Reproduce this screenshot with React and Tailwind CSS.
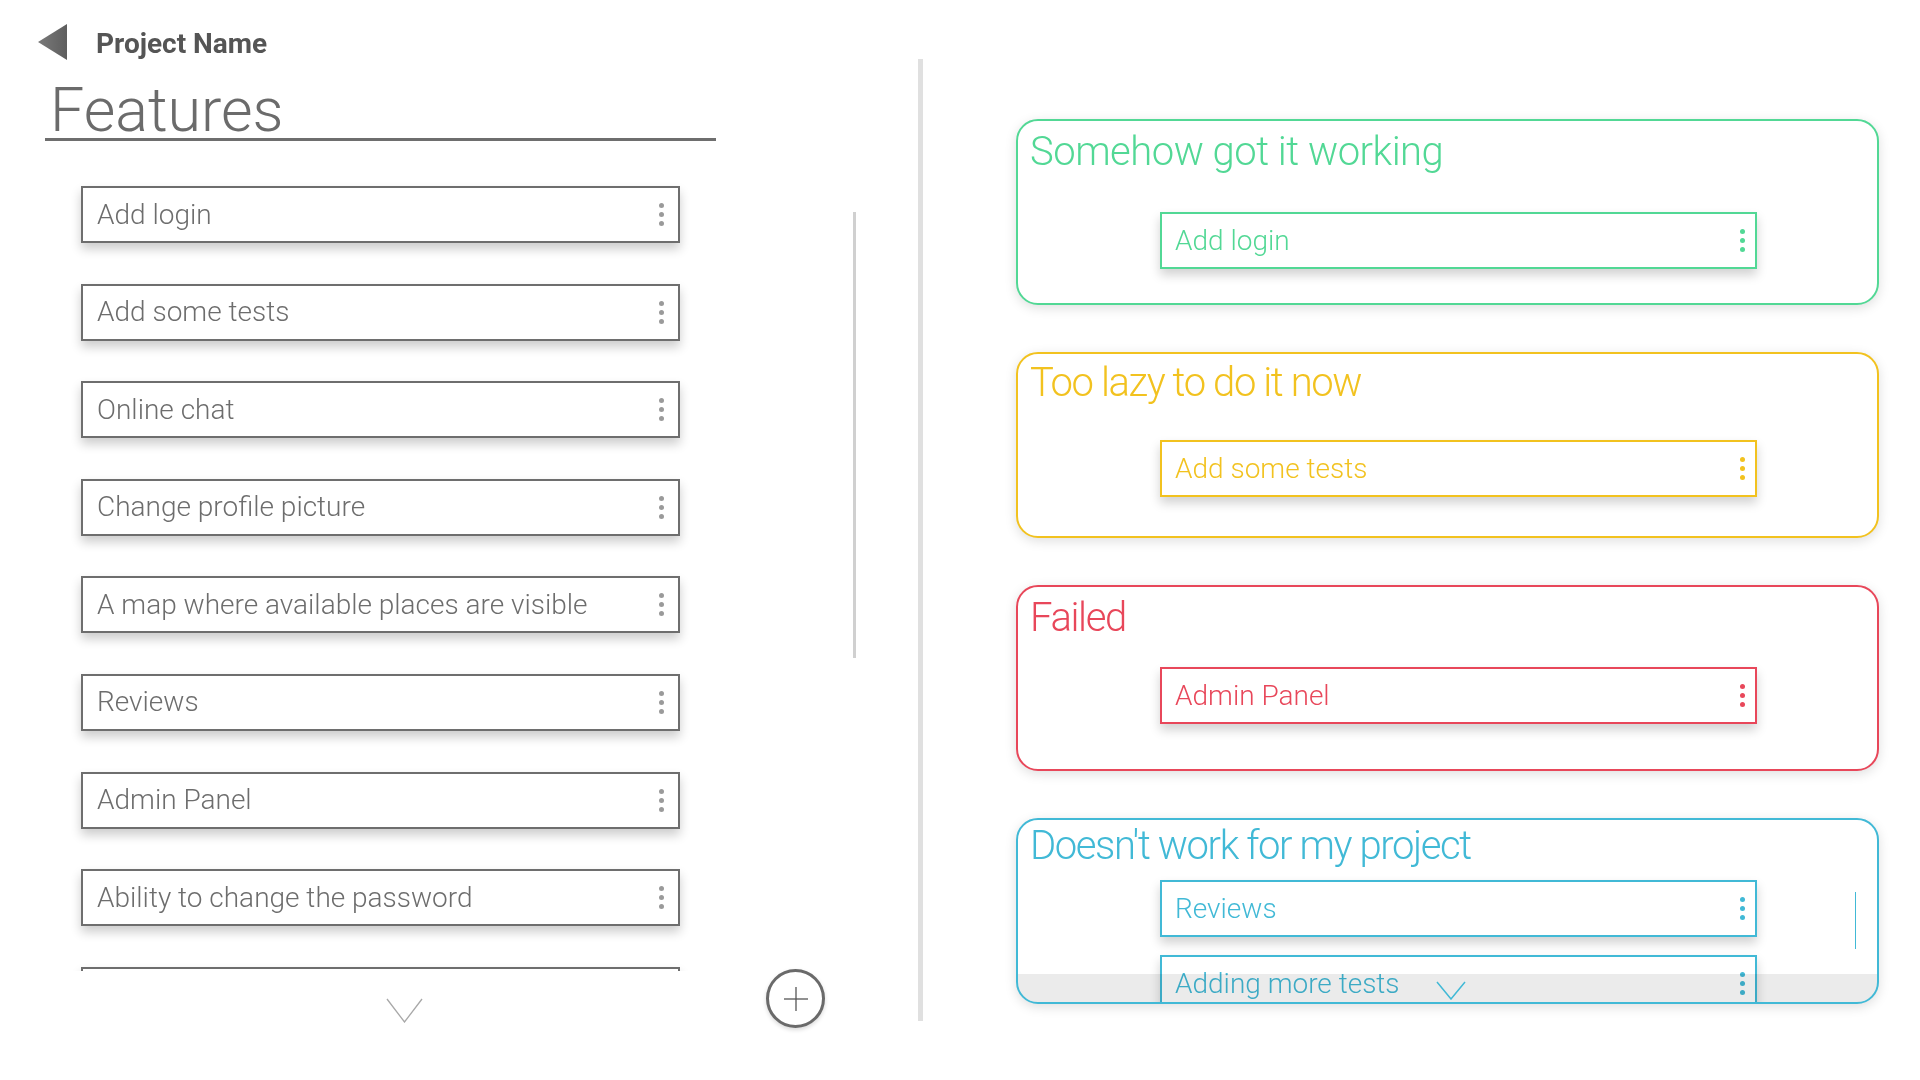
const features = [
  'Add login',
  'Add some tests',
  'Online chat',
  'Change profile picture',
  'A map where available places are visible',
  'Reviews',
  'Admin Panel',
  'Ability to change the password',
  '',
];

const columns = [
  {
    title: 'Somehow got it working',
    border: 'border-[#52d895]',
    text: 'text-[#52d895]',
    dot: 'bg-[#52d895]',
    titlePad: 'pt-[11px] tracking-[-0.5px]',
    innerTop: 'mt-[40px]',
    items: ['Add login'],
  },
  {
    title: 'Too lazy to do it now',
    border: 'border-[#f2c21f]',
    text: 'text-[#f2c21f]',
    dot: 'bg-[#f2c21f]',
    titlePad: 'pt-[9px] tracking-[-1.4px]',
    innerTop: 'mt-[37px]',
    items: ['Add some tests'],
  },
  {
    title: 'Failed',
    border: 'border-[#e8475a]',
    text: 'text-[#e8475a]',
    dot: 'bg-[#e8475a]',
    titlePad: 'pt-[11px] tracking-[-1.4px]',
    innerTop: 'mt-[29px]',
    items: ['Admin Panel'],
  },
  {
    title: "Doesn't work for my project",
    border: 'border-[#41b9d6]',
    text: 'text-[#41b9d6]',
    dot: 'bg-[#41b9d6]',
    titlePad: 'pt-[6px] tracking-[-1.4px]',
    innerTop: 'mt-[14px]',
    items: ['Reviews', 'Adding more tests'],
    scroll: true,
  },
];

function Kebab({ color }) {
  return (
    <div className="flex flex-col gap-[4px]">
      <span className={`w-[5px] h-[5px] rounded-full ${color}`} />
      <span className={`w-[5px] h-[5px] rounded-full ${color}`} />
      <span className={`w-[5px] h-[5px] rounded-full ${color}`} />
    </div>
  );
}

function FeatureCard({ label }) {
  return (
    <div className="w-[599px] h-[57px] shrink-0 flex items-center justify-between border-2 border-[#6e6e6e] bg-white pl-[14px] pr-[14px] shadow-[0_6px_10px_rgba(0,0,0,0.2)]">
      <span className="text-[28px] font-light text-[#6d6d6d] leading-none">{label}</span>
      <Kebab color="bg-[#9a9a9a]" />
    </div>
  );
}

function StatusCard({ col }) {
  return (
    <div
      className={`relative w-[863px] h-[186px] shrink-0 rounded-[22px] border-2 ${col.border} bg-white overflow-hidden shadow-[0_3px_12px_rgba(0,0,0,0.13)]`}
    >
      <div className={`${col.titlePad} pl-[12px] text-[40px] leading-[40px] font-light ${col.text}`}>
        {col.title}
      </div>
      <div className={`${col.innerTop} ml-[142px] flex flex-col gap-[18px]`}>
        {col.items.map((item) => (
          <div
            key={item}
            className={`w-[597px] h-[57px] shrink-0 flex items-center justify-between border-2 ${col.border} bg-white pl-[13px] pr-[10px] shadow-[0_6px_10px_rgba(0,0,0,0.18)]`}
          >
            <span className={`text-[28px] font-light leading-none ${col.text}`}>{item}</span>
            <Kebab color={col.dot} />
          </div>
        ))}
      </div>
      {col.scroll && (
        <>
          <div className="absolute right-[21px] top-[72px] w-[1px] h-[57px] bg-[#41b9d6]" />
          <div className="absolute left-0 right-0 bottom-0 h-[28px] bg-[#ebebeb] mix-blend-multiply">
            <svg className="absolute left-[418px] top-[7px]" width="30" height="19" viewBox="0 0 30 19">
              <polyline points="1,1 15,18 29,1" fill="none" stroke="#41b9d6" strokeWidth="1.5" />
            </svg>
          </div>
        </>
      )}
    </div>
  );
}

export default function App() {
  return (
    <div className="w-[1920px] h-[1080px] bg-white flex font-['Roboto',sans-serif] overflow-hidden">
      {/* left: feature list */}
      <div className="w-[918px] shrink-0 flex flex-col">
        <div className="h-[60px] shrink-0 flex items-start pl-[38px] pt-[24px]">
          <svg width="29" height="36" viewBox="0 0 29 36">
            <defs>
              <linearGradient id="tri" x1="0" x2="1" y1="0" y2="0">
                <stop offset="0" stopColor="#7a7a7a" />
                <stop offset="1" stopColor="#5e5e5e" />
              </linearGradient>
            </defs>
            <polygon points="0,18 29,0 29,36" fill="url(#tri)" />
          </svg>
          <span className="ml-[29px] mt-[2px] text-[28px] leading-[36px] font-bold text-[#555555]">Project Name</span>
        </div>

        <div className="ml-[45px] w-[671px] mt-[22px] border-b-[3px] border-[#6e6e6e] pl-[5px] text-[61px] leading-[56px] font-light text-[#6b6b6b]">
          Features
        </div>

        <div className="flex mt-[35px]">
          <div className="ml-[71px] w-[619px] h-[795px] overflow-hidden px-[10px] pt-[10px] flex flex-col gap-[40.6px]">
            {features.map((f, i) => (
              <FeatureCard key={i} label={f} />
            ))}
          </div>
          <div className="ml-[163px] mt-[36px] w-[3px] h-[446px] bg-[#d0d0d0]" />
        </div>

        <div className="flex">
          <svg className="ml-[386px] mt-[27px]" width="37" height="25" viewBox="0 0 37 25">
            <polyline points="1,1 18.5,24 36,1" fill="none" stroke="#a8a8a8" strokeWidth="1.3" />
          </svg>
          <button className="ml-[343px] -mt-[2px] w-[59px] h-[59px] rounded-full border-[3px] border-[#6a6a6a] bg-white flex items-center justify-center shadow-[0_2px_4px_rgba(0,0,0,0.15)]">
            <svg width="26" height="26" viewBox="0 0 26 26">
              <line x1="13" y1="1" x2="13" y2="25" stroke="#555" strokeWidth="1.3" />
              <line x1="1" y1="13" x2="25" y2="13" stroke="#555" strokeWidth="1.3" />
            </svg>
          </button>
        </div>
      </div>

      {/* divider */}
      <div className="mt-[59px] w-[5px] h-[962px] bg-[#e0e0e0] shrink-0" />

      {/* right: status columns */}
      <div className="flex-1 pt-[119px] pl-[93px] flex flex-col gap-[47px]">
        {columns.map((col) => (
          <StatusCard key={col.title} col={col} />
        ))}
      </div>
    </div>
  );
}
